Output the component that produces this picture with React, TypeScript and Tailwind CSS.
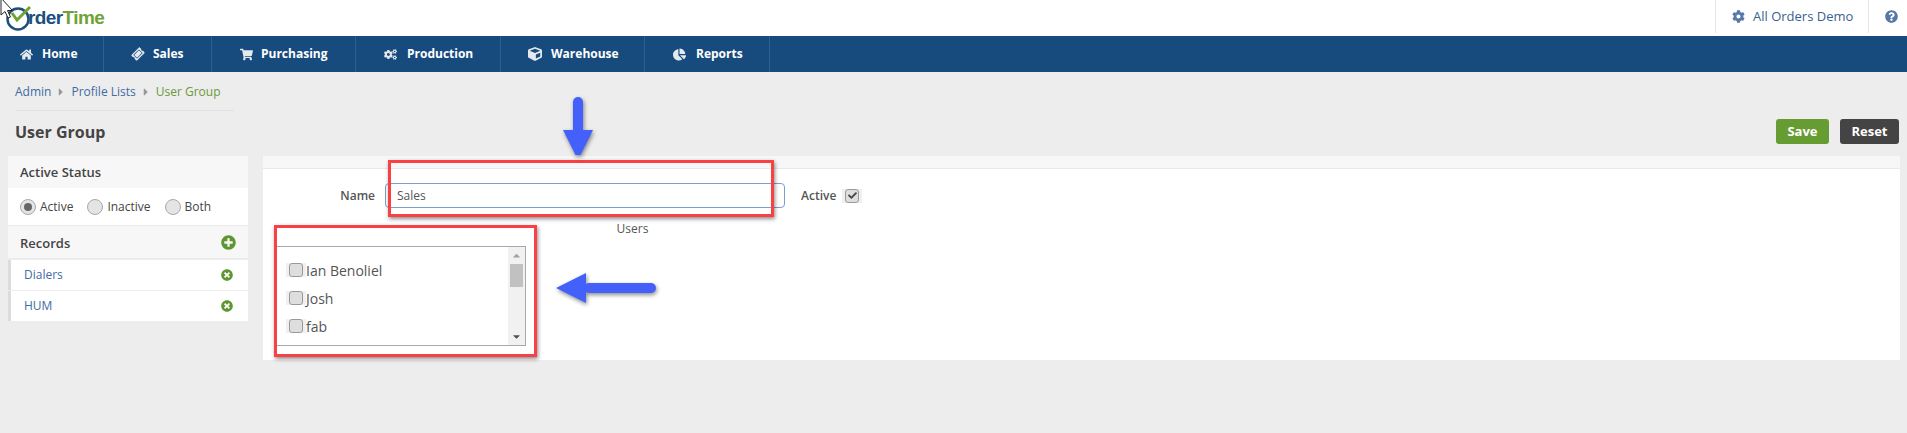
import { FaHome, FaTicketAlt, FaShoppingCart, FaCogs, FaCube, FaChartPie, FaCog, FaQuestionCircle, FaPlusCircle, FaTimesCircle, FaCaretRight, FaCheck, FaCaretUp, FaCaretDown } from "react-icons/fa"
import type { ReactNode } from "react"

const navItems = [
  { label: "Home", icon: <FaHome size={13} />, cls: "w-[104px] pl-[20px] gap-[9px]" },
  { label: "Sales", icon: <FaTicketAlt size={12} className="-rotate-45" />, cls: "w-[108px] pl-[28px] gap-[9px]" },
  { label: "Purchasing", icon: <FaShoppingCart size={13} />, cls: "w-[144px] pl-[28px] gap-[8px]" },
  { label: "Production", icon: <FaCogs size={13} />, cls: "w-[145px] pl-[28px] gap-[10px]" },
  { label: "Warehouse", icon: <FaCube size={14} />, cls: "w-[144px] pl-[27px] gap-[9px]" },
  { label: "Reports", icon: <FaChartPie size={13} />, cls: "w-[125px] pl-[28px] gap-[10px]" },
]

function Radio({ on, label }: { on?: boolean; label: string }) {
  return (
    <span className="flex items-center gap-[4px]">
      <span className="flex h-[16px] w-[16px] items-center justify-center rounded-full border border-[#a9a9a9] bg-[#e4e4e4]">
        {on && <span className="h-[8px] w-[8px] rounded-full bg-[#666]" />}
      </span>
      <span>{label}</span>
    </span>
  )
}

function Box({ children }: { children?: ReactNode }) {
  return (
    <span className="flex h-[14px] w-[20px] items-center justify-center bg-[#f0f0f0]">
      <span className="flex h-[14px] w-[14px] items-center justify-center rounded-[3px] border border-[#9a9a9a] bg-[#dedede] text-[#444]">
        {children}
      </span>
    </span>
  )
}

function RecordRow({ name }: { name: string }) {
  return (
    <div className="flex h-[30px] items-center justify-between border-l-[3px] border-[#dcdcdc] bg-white pl-[13px] pr-[15px] text-[12px] text-[#3f6ba3]">
      {name}
      <FaTimesCircle size={12} className="text-[#5e9732]" />
    </div>
  )
}

function Logo() {
  return (
    <div className="relative flex h-[36px] items-center pl-[28px] text-[19px] font-bold tracking-[-0.6px] font-['Liberation_Sans',sans-serif]">
      <svg width="30" height="28" viewBox="0 0 30 28" className="absolute left-[6px] top-[5px]">
        <circle cx="12" cy="14" r="10.5" fill="none" stroke="#1c4f7f" strokeWidth="2.5" />
        <path d="M6 8 L11 15 L24 2" fill="none" stroke="#6ea338" strokeWidth="3" />
      </svg>
      <span className="text-[#1c4f7f]">rder</span>
      <span className="text-[#6ea338]">Time</span>
    </div>
  )
}

function ArrowDown() {
  return (
    <svg width="36" height="60" viewBox="0 0 36 60" className="absolute left-[560px] top-[95px] drop-shadow-[1px_2px_2px_rgba(0,0,0,0.45)]">
      <rect x="13" y="2" width="10" height="40" rx="5" fill="#4360fb" />
      <path d="M3 35 H33 L18 65 Z" fill="#4360fb" />
    </svg>
  )
}

function ArrowLeft() {
  return (
    <svg width="106" height="34" viewBox="0 0 106 34" className="absolute left-[554px] top-[271px] drop-shadow-[1px_2px_2px_rgba(0,0,0,0.45)]">
      <rect x="30" y="12" width="72" height="10" rx="5" fill="#4360fb" />
      <path d="M2 17 L32 2 V32 Z" fill="#4360fb" />
    </svg>
  )
}

export default function App() {
  return (
    <div className="relative h-[433px] overflow-hidden bg-[#ededed] font-['Open_Sans',sans-serif] text-[#444]">
      {/* top bar */}
      <div className="flex h-[36px] items-start justify-between bg-white">
        <Logo />
        <div className="flex h-[33px] text-[13px] text-[#3b5f8f]">
          <div className="flex w-[153px] items-center gap-[8px] border-l border-[#e6e6e6] pl-[16px]">
            <FaCog size={13} className="text-[#5578a8]" />
            All Orders Demo
          </div>
          <div className="flex w-[39px] items-center border-l border-[#e6e6e6] pl-[16px]">
            <FaQuestionCircle size={13} className="text-[#5578a8]" />
          </div>
        </div>
      </div>

      {/* nav */}
      <div className="flex h-[36px] bg-[#174b7d]">
        {navItems.map((n) => (
          <div key={n.label} className={`flex items-center border-r border-[#2f5f8c] text-[12px] font-bold text-white ${n.cls}`}>
            <span className="text-[#e4e9ee]">{n.icon}</span>
            {n.label}
          </div>
        ))}
      </div>

      <div className="flex h-[84px] items-start justify-between pl-[15px] pr-[8px]">
        <div className="w-[219px]">
          <div className="flex h-[39px] items-center gap-[4px] border-b border-[#e2e2e2] pt-[1px] text-[12px] text-[#3f6ba3]">
            Admin
            <FaCaretRight size={12} className="text-[#999]" />
            Profile Lists
            <FaCaretRight size={12} className="text-[#999]" />
            <span className="text-[#6a9a3c]">User Group</span>
          </div>
          <h1 className="pt-[9px] text-[16px] font-bold text-[#444]">User Group</h1>
        </div>
        <div className="flex gap-[11px] pt-[47px] text-[13px] font-bold text-white">
          <div className="flex h-[25px] w-[53px] items-center justify-center rounded-[3px] bg-[#679c33]">Save</div>
          <div className="flex h-[25px] w-[59px] items-center justify-center rounded-[3px] bg-[#444]">Reset</div>
        </div>
      </div>

      <div className="flex items-start gap-[15px] pl-[8px] pr-[7px]">
        {/* sidebar */}
        <div className="w-[240px] text-[12px]">
          <div className="flex h-[32px] items-center bg-[#f7f7f7] pl-[12px] pt-[1px] text-[13px] font-semibold">Active Status</div>
          <div className="flex h-[38px] items-center gap-[14px] border-b border-[#eaeaea] bg-white pl-[12px]">
            <Radio on label="Active" />
            <Radio label="Inactive" />
            <Radio label="Both" />
          </div>
          <div className="flex h-[33px] items-center justify-between border-b border-[#eaeaea] bg-[#f7f7f7] pl-[12px] pr-[12px] text-[13px] font-semibold">
            <span className="pt-[3px]">Records</span>
            <FaPlusCircle size={15} className="text-[#5e9732]" />
          </div>
          <div className="flex flex-col gap-px pt-px">
            <RecordRow name="Dialers" />
            <RecordRow name="HUM" />
          </div>
        </div>

        {/* form panel */}
        <div className="h-[204px] flex-1 bg-white">
          <div className="h-[13px] border-b border-[#eaeaea] bg-[#f7f7f7]" />
          <div className="mt-[14px] flex h-[25px] items-center text-[12px]">
            <span className="w-[122px] pr-[10px] text-right font-semibold text-[#555]">Name</span>
            <input
              readOnly
              value="Sales"
              className="h-[25px] w-[400px] rounded-[4px] border border-[#7d9fce] px-[11px] text-[12px] text-[#555] outline-none"
            />
            <span className="ml-[16px] font-semibold text-[#555]">Active</span>
            <span className="ml-[6px] flex"><Box><FaCheck size={9} /></Box></span>
          </div>
          <div className="w-[739px] pt-[13px] text-center text-[12px] leading-[16px] text-[#555]">Users</div>

          <div className="ml-[13px] mt-[9px] flex h-[100px] w-[250px] border border-[#a8a8a8] bg-white">
            <div className="flex flex-1 flex-col gap-[9px] pl-[9px] pt-[13px] text-[14px] leading-[17px] text-[#555]">
              <label className="flex items-center"><Box /><span className="pt-[2px]">Ian Benoliel</span></label>
              <label className="flex items-center"><Box /><span className="pt-[2px]">Josh</span></label>
              <label className="flex items-center"><Box /><span className="pt-[2px]">fab</span></label>
            </div>
            <div className="flex w-[17px] flex-col items-center justify-between bg-[#f1f1f1]">
              <FaCaretUp size={11} className="mt-[3px] text-[#a3a3a3]" />
              <div className="mb-auto mt-[3px] h-[23px] w-[13px] bg-[#c1c1c1]" />
              <FaCaretDown size={11} className="mb-[3px] text-[#505050]" />
            </div>
          </div>
        </div>
      </div>

      {/* annotations laid over the screenshot */}
      <div className="absolute left-[388px] top-[160px] h-[57px] w-[386px] border-[3px] border-[#f94144] shadow-[1px_2px_4px_rgba(0,0,0,0.45)]" />
      <div className="absolute left-[274px] top-[225px] h-[132px] w-[263px] border-[3px] border-[#f94144] shadow-[1px_2px_4px_rgba(0,0,0,0.45)]" />
      <ArrowDown />
      <ArrowLeft />

      {/* mouse pointer */}
      <svg width="14" height="20" viewBox="0 0 14 20" className="absolute left-0 top-0">
        <path d="M1 -2 V15 L5 11.5 L8 18 L10.5 17 L7.5 10.5 H12.5 Z" fill="#fff" stroke="#222" strokeWidth="1" />
      </svg>
    </div>
  )
}
